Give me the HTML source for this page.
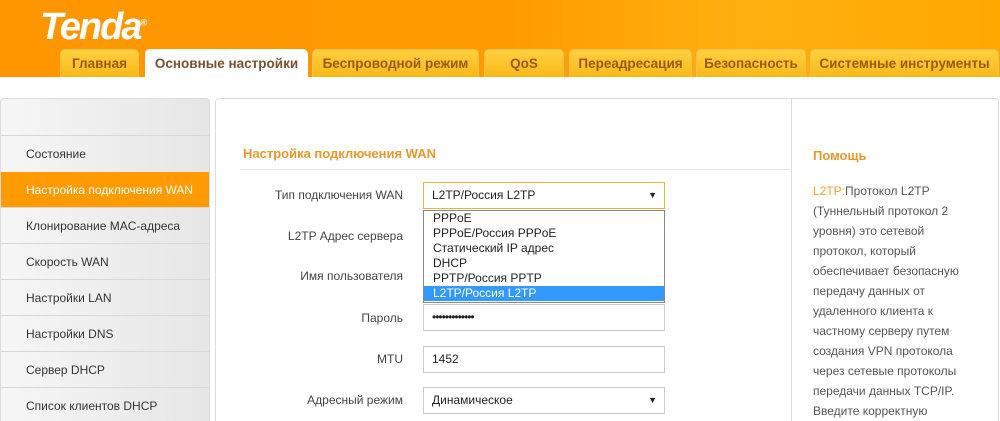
<!DOCTYPE html>
<html><head><meta charset="utf-8"><style>
*{margin:0;padding:0;box-sizing:border-box}
html,body{width:1000px;height:421px;overflow:hidden}
body{background:#fff;font-family:"Liberation Sans",Arial,sans-serif;position:relative}
.hdr{position:absolute;left:0;top:0;width:1000px;height:77px;background:linear-gradient(90deg,#ff9600 0%,#ff9a00 50%,#ffb010 75%,#ffa800 100%)}
.logo{position:absolute;left:40px;top:6px;font:italic bold 38px "Liberation Sans",sans-serif;color:#fff;letter-spacing:-2px}
.logo sup{font-size:9px;letter-spacing:0}
.tab{position:absolute;top:49px;height:28px;background:linear-gradient(#ffd040,#f8b818);border:1px solid #f0c050;border-bottom:none;border-radius:5px 5px 0 0;color:#9a5a10;font-weight:bold;font-size:13.5px;text-align:center;line-height:28px;white-space:nowrap}
.tab.on{background:#fff;color:#7a5030;border-color:#fff}
.side{position:absolute;left:0;top:98px;width:210px;height:330px;border:1px solid #ddd;border-bottom:none;border-radius:4px 4px 0 0;background:linear-gradient(90deg,#f6f6f6,#e6e6e6)}
.side div{position:absolute;left:0;width:208px;height:36px;line-height:36px;padding-left:25px;font-size:12px;color:#333;border-top:1px solid #d8d8d8}
.side div.on{background:#ff9a00;color:#fff;border-top:none}
.main{position:absolute;left:215px;top:98px;width:784px;height:330px;border:1px solid #ddd;border-bottom:none;border-radius:4px 4px 0 0}
.vsep{position:absolute;left:791px;top:99px;width:1px;height:330px;background:#ddd}
h2{position:absolute;left:243px;top:146px;font-size:13px;color:#e8982a;font-weight:bold}
.hl{position:absolute;left:240px;top:169px;width:550px;height:1px;background:#e4e4e4}
.lbl{position:absolute;right:597px;font-size:12px;color:#444;white-space:nowrap}
.inp{position:absolute;left:423px;width:242px;height:27px;border:1px solid #ccc;font-size:12px;line-height:25px;padding-left:8px;color:#222}
.dd{position:absolute;left:423px;top:210px;width:242px;height:93px;border:1px solid #888;background:#fff;font-size:12px;color:#222}
.dd div{height:15px;line-height:15px;padding-left:9px}
.dd .on{background:#3399ff;color:#fff}
.arr{position:absolute;right:7px;top:0;font-size:9px}
.help{position:absolute;left:813px;font-size:12px;color:#555;line-height:20px;width:152px}
</style></head><body>
<div class="hdr"><div class="logo">Tenda<sup>®</sup></div></div>
<div class="tab" style="left:60px;width:79px">Главная</div>
<div class="tab on" style="left:145px;width:163px">Основные настройки</div>
<div class="tab" style="left:312px;width:167px">Беспроводной режим</div>
<div class="tab" style="left:484px;width:80px">QoS</div>
<div class="tab" style="left:569px;width:123px">Переадресация</div>
<div class="tab" style="left:696px;width:110px">Безопасность</div>
<div class="tab" style="left:810px;width:189px">Системные инструменты</div>
<div class="side">
<div style="top:36px">Состояние</div>
<div class="on" style="top:73px">Настройка подключения WAN</div>
<div style="top:108px">Клонирование MAC-адреса</div>
<div style="top:144px">Скорость WAN</div>
<div style="top:180px">Настройки LAN</div>
<div style="top:216px">Настройки DNS</div>
<div style="top:252px">Сервер DHCP</div>
<div style="top:288px">Список клиентов DHCP</div>
</div>
<div class="main"></div>
<div class="vsep"></div>
<h2>Настройка подключения WAN</h2>
<div class="hl"></div>
<div class="lbl" style="top:188px">Тип подключения WAN</div>
<div class="lbl" style="top:229px">L2TP Адрес сервера</div>
<div class="lbl" style="top:269px">Имя пользователя</div>
<div class="lbl" style="top:311px">Пароль</div>
<div class="lbl" style="top:352px">MTU</div>
<div class="lbl" style="top:393px">Адресный режим</div>
<div class="inp" style="top:182px;border-color:#f0b040">L2TP/Россия L2TP<span class="arr">▼</span></div>
<div class="inp" style="top:304px;letter-spacing:-1px">•••••••••••••</div>
<div class="inp" style="top:346px">1452</div>
<div class="inp" style="top:387px">Динамическое<span class="arr">▼</span></div>
<div class="dd"><div>PPPoE</div><div>PPPoE/Россия PPPoE</div><div>Статический IP адрес</div><div>DHCP</div><div>PPTP/Россия PPTP</div><div class="on">L2TP/Россия L2TP</div></div>
<div class="help" style="top:146px;font-size:13px;font-weight:bold;color:#e8982a">Помощь</div>
<div class="help" style="top:181px"><span style="color:#f0a030">L2TP:</span>Протокол L2TP (Туннельный протокол 2 уровня) это сетевой протокол, который обеспечивает безопасную передачу данных от удаленного клиента к частному серверу путем создания VPN протокола через сетевые протоколы передачи данных TCP/IP. Введите корректную</div>
</body></html>
